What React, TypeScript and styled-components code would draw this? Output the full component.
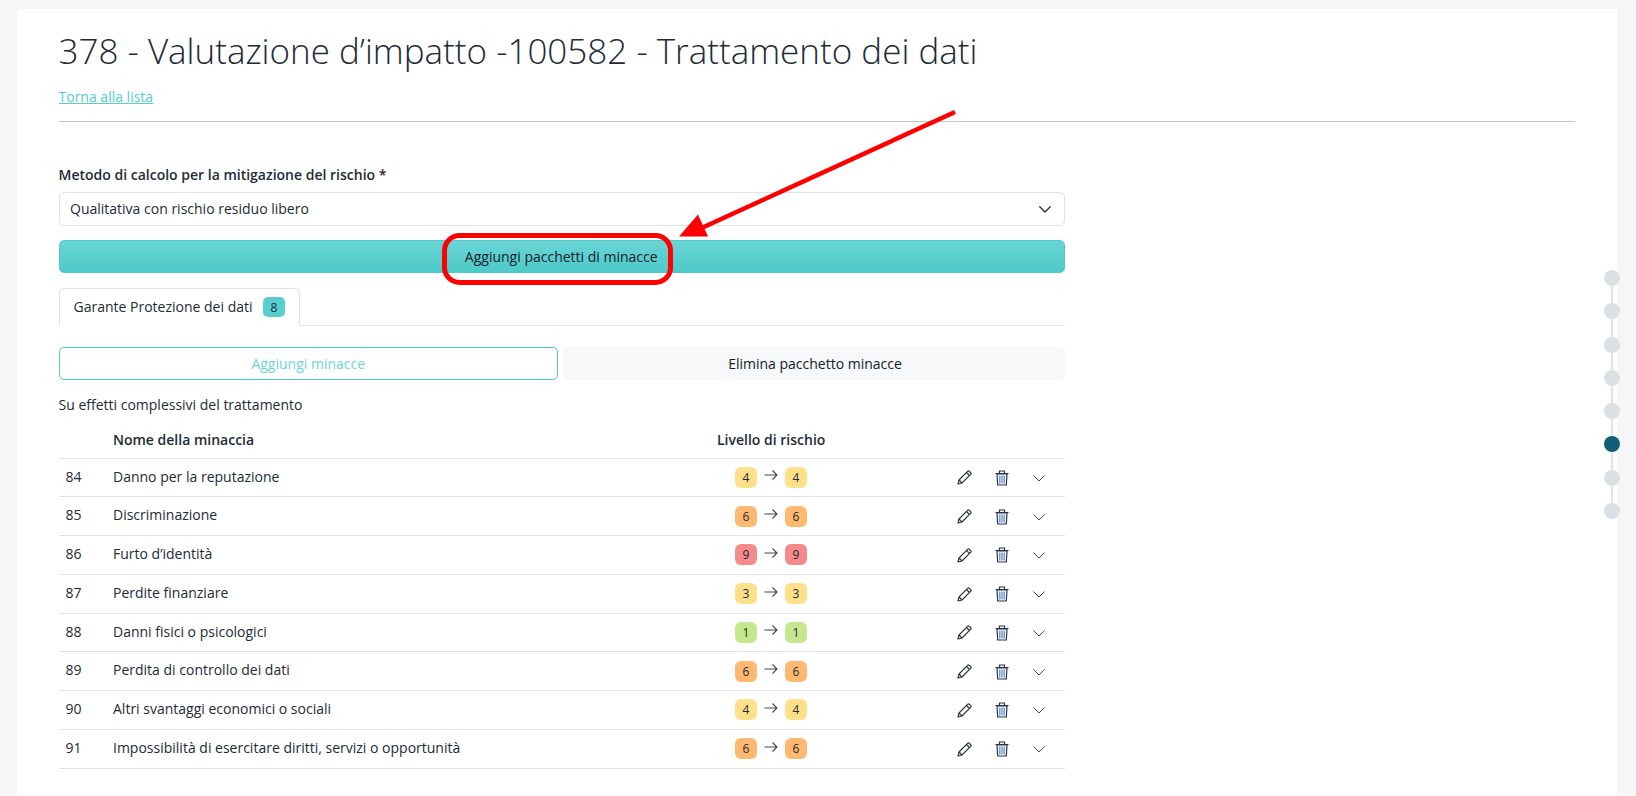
import React from "react";
import styled, { createGlobalStyle } from "styled-components";

const Global = createGlobalStyle`
  html, body { margin: 0; padding: 0; height: 796px; overflow: hidden; background: #f6f6f6; }
  body { font-family: "Open Sans", "Liberation Sans", sans-serif; font-size: 14px; color: #212b36; }
  * { box-sizing: border-box; }
`;

const Panel = styled.main`
  margin: 9px 0 0 17px;
  width: 1600px;
  height: 787px;
  background: #fff;
  padding: 0 42px 0 41.5px;
`;
const Title = styled.h1`
  margin: 0;
  padding-top: 18px;
  font-size: 35px;
  line-height: 48px;
  font-weight: 300;
  color: #212b36;
`;
const BackLink = styled.a`
  display: block;
  margin-top: 12px;
  font-size: 14px;
  line-height: 20px;
  color: #54cdcd;
  text-decoration: underline;
  width: max-content;
`;
const Rule = styled.hr`
  margin: 14px 0 0;
  border: 0;
  border-top: 1px solid #c4c4c4;
`;
const Content = styled.section`
  width: 1006.5px;
`;
const Label = styled.label`
  display: block;
  margin-top: 43px;
  font-weight: 600;
  line-height: 20px;
  font-size: 14px;
`;
const Select = styled.div`
  margin-top: 7px;
  height: 34px;
  border: 1px solid #e1e2e8;
  border-radius: 5px;
  padding: 0 13.5px 1px 10.5px;
  display: flex;
  align-items: center;
  justify-content: space-between;
`;
const PrimaryButton = styled.button`
  display: block;
  width: 100%;
  margin-top: 14px;
  height: 33px;
  padding: 0 1px 0 0;
  font: inherit;
  color: #12212b;
  border: 1px solid #4fcbcb;
  border-radius: 5px;
  background: linear-gradient(180deg, #6ad4d4 0%, #4ecaca 100%);
`;
const TabBar = styled.div`
  margin-top: 15px;
  height: 38px;
  border-bottom: 1px solid #e1e2e8;
  display: flex;
`;
const Tab = styled.div`
  width: 241.5px;
  height: 38px;
  background: #fff;
  border: 1px solid #e1e2e8;
  border-bottom-color: #fff;
  border-radius: 5px 5px 0 0;
  padding-left: 14px;
  display: flex;
  align-items: center;
  gap: 10.5px;
`;
const TabLabel = styled.span`
  margin-top: -2px;
`;
const TabCount = styled.span`
  width: 22px;
  height: 20px;
  border-radius: 5px;
  background: #57cfcf;
  font-size: 12px;
  display: flex;
  align-items: center;
  justify-content: center;
`;
const ButtonRow = styled.div`
  margin-top: 21px;
  display: grid;
  grid-template-columns: 499.5px 502px;
  gap: 5px;
`;
const ActionButton = styled.button<{ $outlined?: boolean }>`
  height: 33px;
  font: inherit;
  border-radius: 5px;
  padding: ${(p) => (p.$outlined ? "0 0 1px" : "0 0 1px 2px")};
  border: ${(p) => (p.$outlined ? "1px solid #4fcbcb" : "0")};
  background: ${(p) => (p.$outlined ? "#fff" : "#f7f8fa")};
  color: ${(p) => (p.$outlined ? "#6bd5d5" : "#12212b")};
`;
const SectionText = styled.p`
  margin: 15px 0 0;
  line-height: 20px;
`;
const Table = styled.div`
  margin-top: 7.5px;
`;
const cols = "54.5px 604px 108px 240px";
const HeadRow = styled.div`
  display: grid;
  grid-template-columns: ${cols};
  height: 36px;
  align-items: center;
  border-bottom: 1px solid #e1e2e8;
  font-weight: 600;
  white-space: nowrap;
  padding-bottom: 1px;
`;
const Row = styled.div`
  display: grid;
  grid-template-columns: ${cols};
  height: 38.75px;
  align-items: center;
  border-bottom: 1px solid #e1e2e8;
`;
const Num = styled.div`
  padding-left: 7px;
  margin-top: -2.5px;
`;
const Name = styled.div`
  margin-top: -2.5px;
`;
const Risk = styled.div`
  display: flex;
  align-items: center;
  justify-content: center;
  gap: 7px;
`;
const RiskBadge = styled.span<{ $bg: string }>`
  width: 22px;
  height: 21px;
  border-radius: 6px;
  background: ${(p) => p.$bg};
  font-size: 12px;
  display: flex;
  align-items: center;
  justify-content: center;
`;
const Actions = styled.div`
  display: flex;
  align-items: center;
  justify-content: flex-end;
  padding-right: 20px;
  padding-top: 1px;
`;
const IconSlot = styled.span<{ $w: number; $ml: number }>`
  display: flex;
  width: ${(p) => p.$w}px;
  margin-left: ${(p) => p.$ml}px;
`;
const ArrowIcon = styled.svg`
  margin-top: -4px;
`;
const Stepper = styled.nav`
  position: fixed;
  left: 1604px;
  top: 270px;
  width: 16px;
  display: flex;
  flex-direction: column;
  align-items: center;
`;
const Dot = styled.span<{ $active?: boolean }>`
  width: 16px;
  height: 16px;
  border-radius: 50%;
  background: ${(p) => (p.$active ? "#145d7a" : "#dcdfe4")};
`;
const Line = styled.span`
  width: 2px;
  height: 17.3px;
  background: #e1e3e8;
`;
const Overlay = styled.svg`
  position: fixed;
  inset: 0;
  pointer-events: none;
`;

const Chevron = ({ size = 12, color = "#35475a", weight = 1.3 }: { size?: number; color?: string; weight?: number }) => (
  <svg width={size} height={size} viewBox="0 0 16 16" fill="none" stroke={color} strokeWidth={weight} strokeLinecap="round">
    <path d="M1 5l7 7 7-7" />
  </svg>
);
const Arrow = () => (
  <ArrowIcon width="14" height="12" viewBox="0 0 14 12" fill="none" stroke="#3f444c" strokeWidth="1.1">
    <path d="M0.500 6H13M8.500 1.500L13 6l-4.500 4.500" />
  </ArrowIcon>
);
const Pencil = () => (
  <svg width="15" height="15" viewBox="0 0 15 15" fill="none" stroke="#2f3542" strokeWidth="1.200" strokeLinejoin="round">
    <path d="M1 14l1-4L10.800 1.200a1 1 0 0 1 1.400 0l1.600 1.600a1 1 0 0 1 0 1.400L5 13z" />
    <path d="M9.500 2.500l3 3M2 10l3 3" />
  </svg>
);
const Trash = () => (
  <svg width="14" height="16" viewBox="0 0 14 16" fill="none">
    <path d="M2 4l.7 11h8.600l.7-11z" stroke="#2b3345" strokeWidth="1.200" />
    <path d="M0.500 3.500h13M4.500 3.300V1h5v2.300" stroke="#2b3345" strokeWidth="1.200" />
    <path d="M4.800 5.500v8M7 5.500v8M9.200 5.500v8" stroke="#6f9ad6" strokeWidth="1.500" />
  </svg>
);

const C = { y: "#ffe08a", o: "#ffb870", r: "#f58a8a", g: "#c5e88f" };
const rows = [
  [84, "Danno per la reputazione", 4, C.y],
  [85, "Discriminazione", 6, C.o],
  [86, "Furto d’identità", 9, C.r],
  [87, "Perdite finanziare", 3, C.y],
  [88, "Danni fisici o psicologici", 1, C.g],
  [89, "Perdita di controllo dei dati", 6, C.o],
  [90, "Altri svantaggi economici o sociali", 4, C.y],
  [91, "Impossibilità di esercitare diritti, servizi o opportunità", 6, C.o],
] as const;

export default function App() {
  return (
    <>
      <Global />
      <Panel>
        <Title>378 - Valutazione d’impatto -100582 - Trattamento dei dati</Title>
        <BackLink href="#">Torna alla lista</BackLink>
        <Rule />
        <Content>
          <Label>Metodo di calcolo per la mitigazione del rischio *</Label>
          <Select>
            <span>Qualitativa con rischio residuo libero</span>
            <Chevron color="#212b36" weight={1.7} />
          </Select>
          <PrimaryButton>Aggiungi pacchetti di minacce</PrimaryButton>
          <TabBar>
            <Tab>
              <TabLabel>Garante Protezione dei dati</TabLabel>
              <TabCount>8</TabCount>
            </Tab>
          </TabBar>
          <ButtonRow>
            <ActionButton $outlined>Aggiungi minacce</ActionButton>
            <ActionButton>Elimina pacchetto minacce</ActionButton>
          </ButtonRow>
          <SectionText>Su effetti complessivi del trattamento</SectionText>
          <Table>
            <HeadRow>
              <span />
              <span>Nome della minaccia</span>
              <span>Livello di rischio</span>
              <span />
            </HeadRow>
            {rows.map(([n, name, v, c]) => (
              <Row key={n}>
                <Num>{n}</Num>
                <Name>{name}</Name>
                <Risk>
                  <RiskBadge $bg={c}>{v}</RiskBadge>
                  <Arrow />
                  <RiskBadge $bg={c}>{v}</RiskBadge>
                </Risk>
                <Actions>
                  <IconSlot $w={15} $ml={0}><Pencil /></IconSlot>
                  <IconSlot $w={14} $ml={22.5}><Trash /></IconSlot>
                  <IconSlot $w={12} $ml={24.5}><Chevron /></IconSlot>
                </Actions>
              </Row>
            ))}
          </Table>
        </Content>
      </Panel>
      <Stepper>
        {[0, 1, 2, 3, 4, 5, 6, 7].map((i) => (
          <React.Fragment key={i}>
            {i > 0 && <Line />}
            <Dot $active={i === 5} />
          </React.Fragment>
        ))}
      </Stepper>
      <Overlay width="1636" height="796" viewBox="0 0 1636 796">
        <rect x="444.500" y="235.500" width="226" height="47" rx="15" fill="none" stroke="#f00" strokeWidth="5" />
        <path d="M955 112L695 231" stroke="#f00" strokeWidth="4.500" fill="none" />
        <path d="M679 236.500L698 214.500L708 236.500Z" fill="#f00" />
      </Overlay>
    </>
  );
}
